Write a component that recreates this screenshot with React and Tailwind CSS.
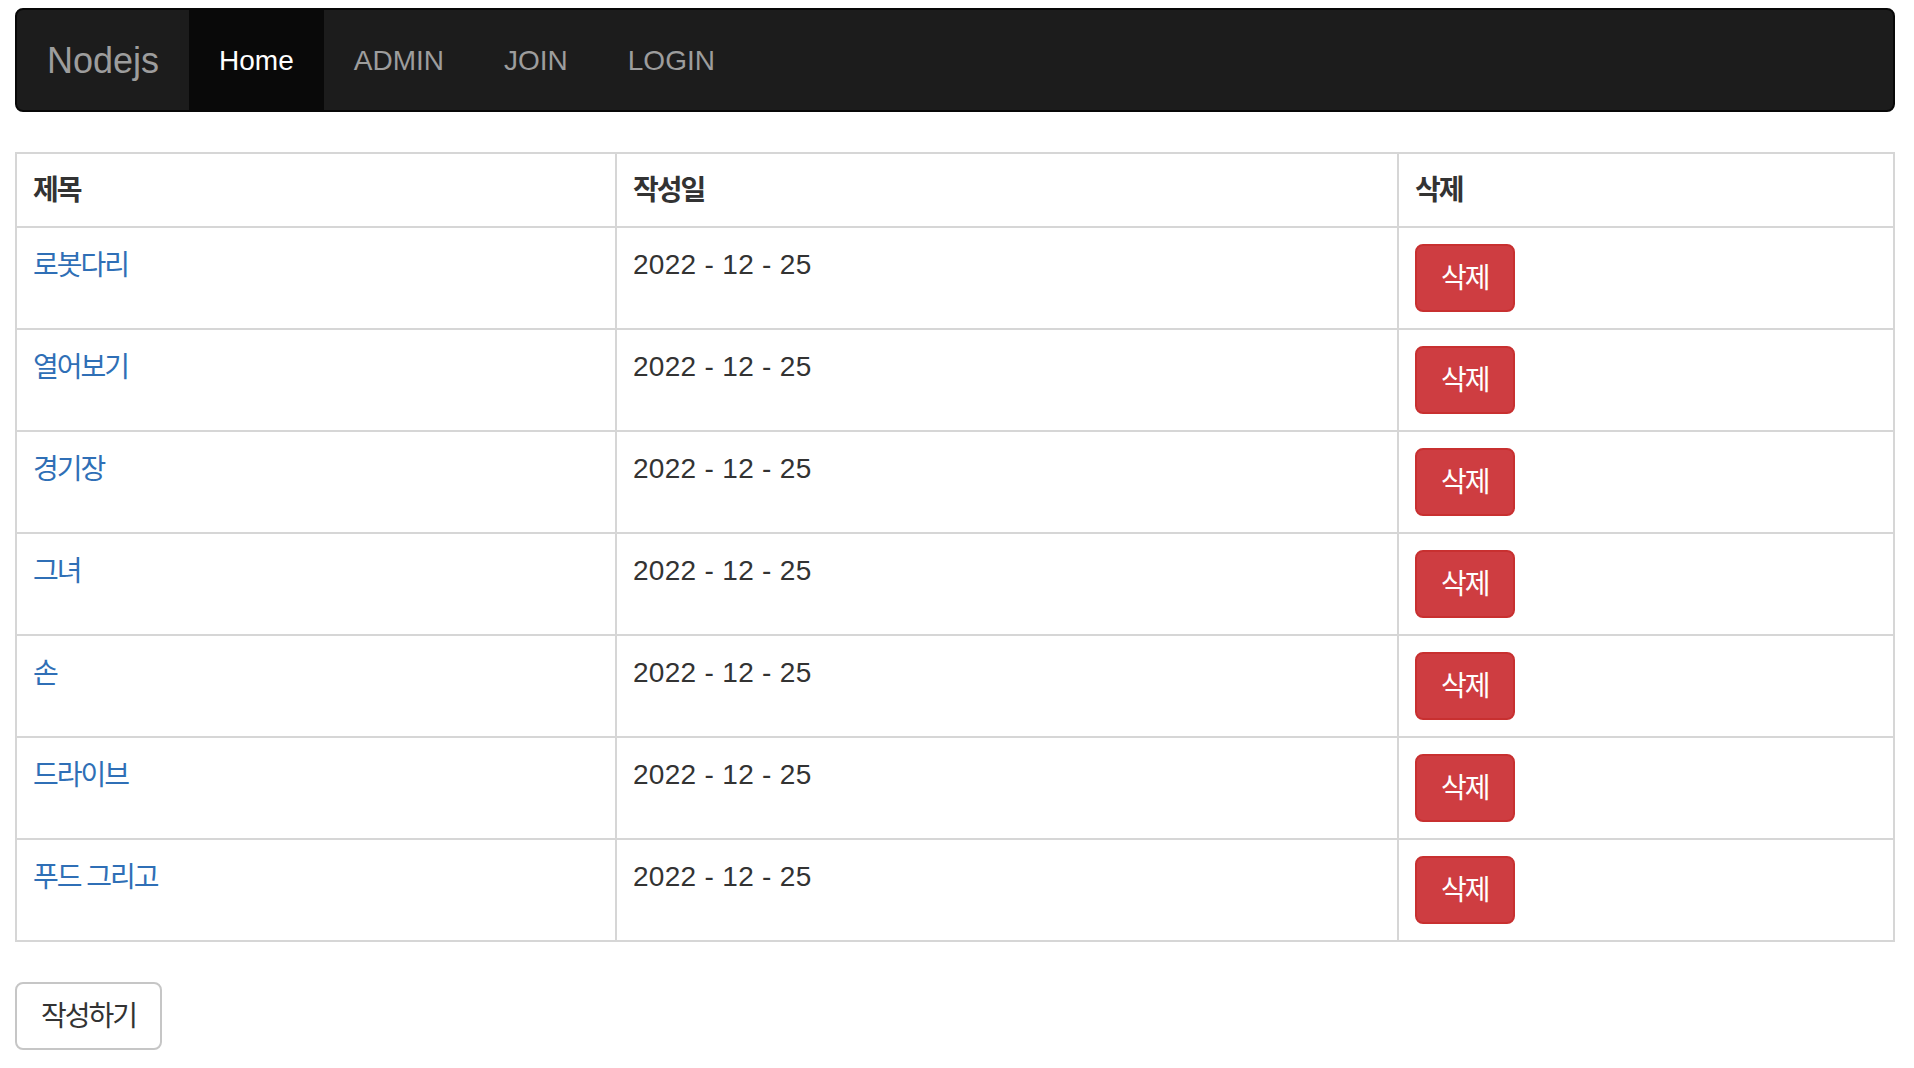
import React from "react";

const rows = ["로봇다리", "열어보기", "경기장", "그녀", "손", "드라이브", "푸드 그리고"];

export default function App() {
  return (
    <div className="min-h-[1068px] bg-white font-['Liberation_Sans','Noto_Sans_CJK_KR',sans-serif] text-[28px] leading-[40px] text-[#333]">
      <div className="ml-[15px] mr-[19px] pt-[8px]">
        <nav className="flex h-[104px] items-stretch rounded-[8px] border-2 border-[#080808] bg-[#1c1c1c]">
          <a className="block px-[30px] pt-[31px] pb-[29px] text-[36px] leading-[40px] text-[#9d9d9d]">Nodejs</a>
          <a className="block bg-[#090909] px-[30px] pt-[31px] pb-[29px] text-white">Home</a>
          <a className="block px-[30px] pt-[31px] pb-[29px] text-[#9d9d9d]">ADMIN</a>
          <a className="block px-[30px] pt-[31px] pb-[29px] text-[#9d9d9d]">JOIN</a>
          <a className="block px-[30px] pt-[31px] pb-[29px] text-[#9d9d9d]">LOGIN</a>
        </nav>

        <table className="mt-[40px] w-full border-collapse border-2 border-[#d6d6d6]">
          <thead>
            <tr>
              <th className="w-[600px] border-2 border-[#d6d6d6] px-[16px] pt-[17px] pb-[15px] text-left font-bold tracking-[-2px]">제목</th>
              <th className="w-[782px] border-2 border-[#d6d6d6] px-[16px] pt-[17px] pb-[15px] text-left font-bold tracking-[-2px]">작성일</th>
              <th className="border-2 border-[#d6d6d6] px-[16px] pt-[17px] pb-[15px] text-left font-bold tracking-[-2px]">삭제</th>
            </tr>
          </thead>
          <tbody>
            {rows.map((t) => (
              <tr key={t}>
                <td className="border-2 border-[#d6d6d6] px-[16px] pt-[18px] pb-[14px] align-top">
                  <a className="tracking-[-2px] text-[#2f6fb6]">{t}</a>
                </td>
                <td className="border-2 border-[#d6d6d6] px-[16px] pt-[17px] pb-[15px] align-top tracking-[0.3px]">2022 - 12 - 25</td>
                <td className="border-2 border-[#d6d6d6] p-[16px] align-top">
                  <button className="rounded-[8px] border-2 border-[#c83030] bg-[#ce3d41] px-[24px] pt-[13px] pb-[11px] text-[28px] leading-[40px] tracking-[-2px] text-white">
                    삭제
                  </button>
                </td>
              </tr>
            ))}
          </tbody>
        </table>

        <button className="mt-[40px] rounded-[8px] border-2 border-[#c6c6c6] bg-white px-[24px] pt-[13px] pb-[11px] text-[28px] leading-[40px] tracking-[-2px] text-[#333]">
          작성하기
        </button>
      </div>
    </div>
  );
}
